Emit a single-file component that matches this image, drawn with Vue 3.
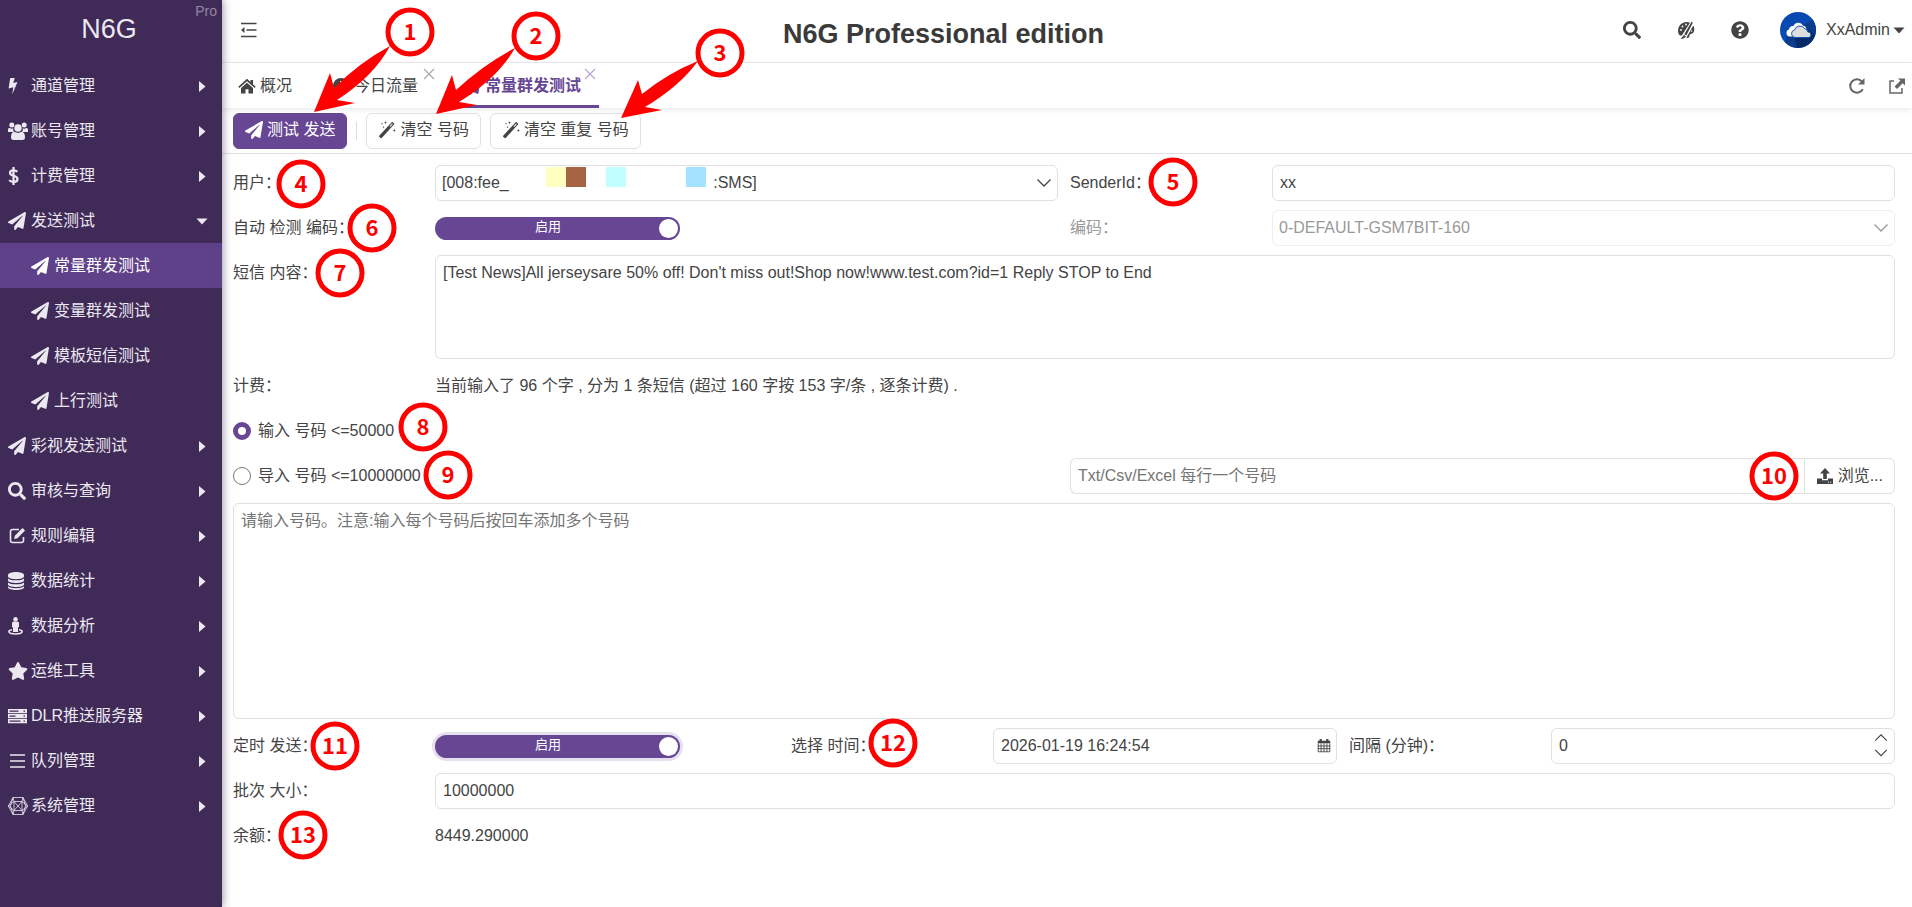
<script setup>
import { h, ref } from 'vue'

const shapes = {
  plane: ['0 0 512 512', '<path d="M476 3.2L12.5 270.6c-18.1 10.4-15.8 35.6 2.2 43.2L121 358.4l287.3-253.2c5.5-4.9 13.3 2.6 8.6 8.3L176 407v80.5c0 23.6 28.5 32.9 42.5 15.8L282 426l124.6 52.2c14.2 6 30.4-2.9 33-18.2l72-432C515 7.8 493.3-6.8 476 3.2z"/>'],
  bolt: ['0 0 18 18', '<path d="M2.200 1h4.600L5.200 6l4.300-1.100L4.200 17.500l1.100-7.300L.6 11.400z"/>'],
  users: ['0 0 20 18', '<circle cx="3.800" cy="3" r="2.500"/><circle cx="16.200" cy="3" r="2.500"/><path d="M0 10V7.500Q0 5.500 1.800 6q2 1.200 3.600.2Q4.500 8.600 6 10zM20 10V7.500Q20 5.500 18.200 6q-2 1.200-3.600.2Q15.500 8.600 14 10z"/><circle cx="10" cy="6" r="3.700"/><path d="M3 15.300C3 12 4.200 9.800 6.400 9.800q3.600 2.200 7.200 0C15.800 9.800 17 12 17 15.300q0 2.700-2.500 2.700h-9Q3 18 3 15.300z"/>'],
  dollar: ['0 0 18 18', '<path d="M9.300 4.700C8.200 3.400 2 2.200 2 5.900c0 3.700 7.500 2 7.500 6 0 4-6.700 3.300-8.300 1.200M5.500 0v18" fill="none" stroke="currentColor" stroke-width="2.200"/>'],
  search: ['0 0 512 512', '<path d="M505 442.700L405.300 343c-4.500-4.500-10.600-7-17-7H372c27.600-35.300 44-79.700 44-128C416 93.100 322.900 0 208 0S0 93.100 0 208s93.100 208 208 208c48.300 0 92.700-16.400 128-44v16.300c0 6.400 2.500 12.500 7 17l99.700 99.700c9.400 9.400 24.600 9.400 33.900 0l28.300-28.300c9.400-9.400 9.400-24.600.1-34zM208 336c-70.700 0-128-57.200-128-128 0-70.700 57.200-128 128-128 70.700 0 128 57.200 128 128 0 70.700-57.200 128-128 128z"/>'],
  edit: ['0 0 18 18', '<path d="M11 2.500H4.500q-2 0-2 2v9q0 2 2 2h9q2 0 2-2V10" fill="none" stroke="currentColor" stroke-width="1.600"/><path d="M6.200 12l.6-3.300L14 1.500q.6-.5 1.200 0l1.400 1.400q.5.600 0 1.200L9.500 11.300z"/>'],
  database: ['0 0 18 18', '<path d="M0 3c0-4 16-4 16 0v1.600c0 3.400-16 3.400-16 0z"/><path d="M0 6.400c2 2.500 14 2.500 16 0v2.200c0 3.300-16 3.300-16 0zM0 10.400c2 2.500 14 2.500 16 0v2.200c0 3.300-16 3.300-16 0zM0 14.300c2 2.500 14 2.500 16 0v1c0 3.600-16 3.600-16 0z"/>'],
  person: ['0 0 18 18', '<circle cx="7.500" cy="2.200" r="2.200"/><path d="M4 6q0-1.500 1.500-1.500h4Q11 4.500 11 6v4l-1 .5V15H5v-4.500L4 10z"/><path d="M4 12.700C-1 13.500 0 17 7.500 17s8.500-3.500 3.500-4.300" fill="none" stroke="currentColor" stroke-width="1.600"/>'],
  star: ['0 0 576 512', '<path d="M259.300 17.800L194 150.200 47.900 171.500c-26.200 3.800-36.700 36.100-17.700 54.600l105.700 103-25 145.500c-4.500 26.300 23.200 46 46.400 33.700L288 439.600l130.700 68.700c23.200 12.200 50.900-7.400 46.400-33.700l-25-145.500 105.700-103c19-18.500 8.500-50.800-17.700-54.600L382 150.200 316.700 17.800c-11.700-23.600-45.600-23.900-57.400 0z"/>'],
  server: ['0 0 19 18', '<path fill-rule="evenodd" d="M0 2h19v4.300H0zM1.500 3.400v1.400h9V3.400zM15.500 3.400v1.400H17V3.400zM0 7h19v4.300H0zM1.500 8.400v1.400h6V8.400zM15.500 8.400v1.400H17V8.400zM0 12h19v4.300H0zM1.500 13.400v1.400h11v-1.400zM15.500 13.400v1.400H17v-1.400z"/>'],
  lines: ['0 0 18 18', '<path d="M2 3h15M2 9h15M2 15h15" fill="none" stroke="currentColor" stroke-width="1.300"/>'],
  mesh: ['0 0 20 18', '<g fill="none" stroke="currentColor" stroke-width=".8"><path d="M5 .5h10L19.600 9 15 17.500H5L.4 9z"/><path d="M5 .5L6 4.500h8l1-4M6 4.500L.4 9 6 13.500l8-9L19.600 9 14 13.500l-8-9v9h8v-9M5 17.500l1-4M15 17.500l-1-4M5 .5L2.500 9 5 17.500M15 .5L17.500 9 15 17.500"/></g>'],
  fold: ['0 0 18 18', '<path d="M1 2.500h15.500M6.500 9h10M1 15.500h15.500" fill="none" stroke="currentColor" stroke-width="1.400"/><path d="M4.500 6v6L1 9z"/>'],
  palette: ['0 0 18 18', '<path d="M1 10C1 4.500 5 1 9.500 1q2 0 3.500.7L4.800 14.500C2.500 15.300 1 13 1 10z"/><path d="M14.600.8l1.300.7-6.600 13-2-1.200zM16.300 4.500c2 3.500 1 8.500-2.500 8.500-1.200 0-1.300.8-1.300 2q-.3 2.500-3.200 1.800zM6.800 14l2 1.200Q7.600 17.800 3.400 18q1.800-1.500 3.400-4z"/><g fill="#fff"><circle cx="4" cy="9" r=".9"/><circle cx="5.500" cy="5.500" r=".9"/><circle cx="9" cy="3.500" r=".9"/><circle cx="14.500" cy="10" r=".8"/></g>'],
  help: ['0 0 512 512', '<path d="M504 256c0 136.997-111.043 248-248 248S8 392.997 8 256C8 119.083 119.043 8 256 8s248 111.083 248 248zM262.655 90c-54.497 0-89.255 22.957-116.549 63.758-3.536 5.286-2.353 12.415 2.715 16.258l34.699 26.310c5.205 3.947 12.621 3.008 16.665-2.122 17.864-22.658 30.113-35.797 57.303-35.797 20.429 0 45.698 13.148 45.698 32.958 0 14.976-12.363 22.667-32.534 33.976C247.128 238.528 216 254.941 216 296v4c0 6.627 5.373 12 12 12h56c6.627 0 12-5.373 12-12v-1.333c0-28.462 83.186-29.647 83.186-106.667 0-58.002-60.165-102-116.531-102zM256 338c-25.365 0-46 20.635-46 46 0 25.364 20.635 46 46 46s46-20.636 46-46c0-25.365-20.635-46-46-46z"/>'],
  home: ['0 0 18 18', '<path d="M9 1.800l3.500 3.200V3H15v4.300l2.700 2.400-1 1.200L9 4.200l-7.700 6.700-1-1.200z"/><path d="M9 5.800l6 5.200v5.500h-4.500v-4.300h-3v4.300H3V11z"/>'],
  clock: ['0 0 18 18', '<path fill-rule="evenodd" d="M9 1a8 8 0 1 0 0 16A8 8 0 1 0 9 1zM8 4h2v4.500l3 2-1 1.500-4-2.500z"/>'],
  wand: ['0 0 18 18', '<path d="M1.200 14.700L13.700 1.200q.5-.5 1 0l1.300 1.200q.5.500 0 1L3.700 17q-.5.500-1 0l-1.500-1.300q-.5-.5 0-1z"/><path d="M11.600 5.200l2.400-2.600.7.700-2.400 2.600z" fill="#fff"/><path d="M7.500 0l.4 1.300 1.300.4-1.300.4-.4 1.300-.4-1.300-1.300-.4 1.300-.4zM4 1.500l.3.900.9.3-.9.300-.3.900-.3-.9-.9-.3.900-.3zM16.300 8l.4 1.100 1.100.4-1.100.4-.4 1.100-.4-1.100-1.100-.4 1.100-.4zM5.500 5l.3.800.8.300-.8.300-.3.800-.3-.8-.8-.3.800-.3z"/>'],
  refresh: ['0 0 18 18', '<path d="M14.800 12.200A6.700 6.700 0 1 1 14 4.600" fill="none" stroke="currentColor" stroke-width="2"/><path d="M16.500 1v6.500H10z"/>'],
  external: ['0 0 18 18', '<path d="M6 4H2v12h12v-5" fill="none" stroke="currentColor" stroke-width="1.500"/><path d="M10 1.500h7v7l-2.300-2.300L9 12 6.600 9.600l5.700-5.800z"/>'],
  upload: ['0 0 18 18', '<path d="M9 1l5 5.500h-3.200V12H7.200V6.500H4z"/><path fill-rule="evenodd" d="M1 11.500h5v1.700h6v-1.700h5V17H1zM12 14.700v1h1v-1zM14.300 14.700v1h1v-1z"/>'],
  calendar: ['0 0 18 18', '<path d="M2 3h2V1h2.500v2h5V1H14v2h2v3H2z"/><path d="M2.500 6v9.500h13V6M2 9h14M2 12h14M5.700 6v9.500M9 6v9.500M12.300 6v9.500" fill="none" stroke="currentColor" stroke-width="1"/>'],
  close: ['0 0 18 18', '<path d="M4 4l10 10M14 4L4 14" fill="none" stroke="currentColor" stroke-width="1.300"/>'],
  down: ['0 0 18 18', '<path d="M2.500 5.500L9 12l6.500-6.500" fill="none" stroke="currentColor" stroke-width="1.300"/>'],
  up: ['0 0 18 18', '<path d="M2.500 12L9 5.500l6.500 6.500" fill="none" stroke="currentColor" stroke-width="1.300"/>'],
  caretRight: ['0 0 18 18', '<path d="M6 4l6.500 5.500L6 15z"/>'],
  caretDown: ['0 0 18 18', '<path d="M3.500 6.500h11L9 12.500z"/>']
}

const Icon = (props) =>
  h('svg', {
    viewBox: shapes[props.name][0],
    fill: 'currentColor',
    'aria-hidden': 'true',
    innerHTML: shapes[props.name][1]
  })
Icon.props = ['name']

const menu = [
  { icon: 'bolt', text: '通道管理' },
  { icon: 'users', text: '账号管理' },
  { icon: 'dollar', text: '计费管理' },
  {
    icon: 'plane',
    text: '发送测试',
    children: ['常量群发测试', '变量群发测试', '模板短信测试', '上行测试']
  },
  { icon: 'plane', text: '彩视发送测试' },
  { icon: 'search', text: '审核与查询' },
  { icon: 'edit', text: '规则编辑' },
  { icon: 'database', text: '数据统计' },
  { icon: 'person', text: '数据分析' },
  { icon: 'star', text: '运维工具' },
  { icon: 'server', text: 'DLR推送服务器' },
  { icon: 'lines', text: '队列管理' },
  { icon: 'mesh', text: '系统管理' }
]

const marks = [
  [410, 32], [536, 36], [720, 53], [301, 184], [1173, 182], [372, 228], [340, 273],
  [423, 427], [448, 475], [1774, 476], [335, 746], [893, 743], [303, 835]
]

const account = '[008:fee_' + '\u00a0'.repeat(46) + ':SMS]'
const sender = ref('xx')
const autoDetect = ref(true)
const message = ref("[Test News]All jerseysare 50% off! Don't miss out!Shop now!www.test.com?id=1 Reply STOP to End")
const source = ref('input')
const scheduled = ref(true)
const sendAt = ref('2026-01-19 16:24:54')
const interval = ref(0)
const batch = ref('10000000')
</script>

<template>
  <div class="app">
    <aside class="sidebar">
      <div class="brand"><span class="brand-name">N6G</span><small class="edition">Pro</small></div>
      <nav>
        <template v-for="item in menu" :key="item.text">
          <a href="#" class="item">
            <span class="item-icon"><Icon :name="item.icon" class="icon" /></span>
            <span class="item-text">{{ item.text }}</span>
            <Icon :name="item.children ? 'caretDown' : 'caretRight'" class="caret" />
          </a>
          <a
            v-for="(child, i) in item.children"
            :key="child"
            href="#"
            class="item child"
            :class="{ active: i === 0 }"
          >
            <span class="item-icon"><Icon name="plane" class="icon" /></span>
            <span>{{ child }}</span>
          </a>
        </template>
      </nav>
    </aside>

    <main class="main">
      <header class="header">
        <button class="fold" aria-label="折叠菜单"><Icon name="fold" class="icon" /></button>
        <h1>N6G Professional edition</h1>
        <div class="tools">
          <button aria-label="搜索"><Icon name="search" class="icon" /></button>
          <button aria-label="主题"><Icon name="palette" class="icon" /></button>
          <button aria-label="帮助"><Icon name="help" class="icon" /></button>
        </div>
        <button class="user">
          <svg class="avatar" viewBox="0 0 36 36" aria-hidden="true">
            <circle cx="18" cy="18" r="18" fill="#094ab2" />
            <path d="M22 14L32.500 7.300A18 18 0 0 1 34.500 25L28 22z" fill="#0a3c8c" />
            <path d="M7 24h7l4 11.900A18 18 0 0 1 5 30z" fill="#0a3c8c" />
            <path d="M14 24.500L29 18l6 5A18 18 0 0 1 17 36z" fill="#062a66" />
            <path d="M9.500 24.500a3.600 3.600 0 0 1-.5-7 3.800 3.800 0 0 1 4.300-3.500 5.300 5.300 0 0 1 9.700-.3 3.500 3.500 0 0 1 3.300 3.300l-5 7.500z" fill="#fff" />
            <path d="M15.500 25.500a3.800 3.800 0 0 1-1-7.500 5.600 5.600 0 0 1 10-1.500 4 4 0 0 1 3.300 3.500 2.800 2.800 0 0 1 1 5.500z" fill="#dedede" stroke="#094ab2" stroke-width=".9" />
          </svg>
          <span>XxAdmin</span>
          <Icon name="caretDown" class="icon" />
        </button>
      </header>

      <div class="tabs">
        <a href="#" class="tab"><Icon name="home" class="icon" />概况</a>
        <a href="#" class="tab"><Icon name="clock" class="icon" />今日流量<Icon name="close" class="close" /></a>
        <a href="#" class="tab current"><Icon name="plane" class="icon" />常量群发测试<Icon name="close" class="close" /></a>
        <div class="tab-tools">
          <button aria-label="刷新"><Icon name="refresh" class="icon" /></button>
          <button aria-label="新窗口打开"><Icon name="external" class="icon" /></button>
        </div>
      </div>

      <div class="toolbar">
        <button class="btn primary"><Icon name="plane" class="icon" />测试 发送</button>
        <span class="divider"></span>
        <button class="btn"><Icon name="wand" class="icon" />清空 号码</button>
        <button class="btn"><Icon name="wand" class="icon" />清空 重复 号码</button>
      </div>

      <form class="form" @submit.prevent>
        <div class="row halves">
          <div class="field">
            <label for="account">用户：</label>
            <div class="control">
              <select id="account" class="box"><option>{{ account }}</option></select>
              <Icon name="down" class="chevron" />
              <span class="swatches"><i class="yellow"></i><i class="brown"></i><i></i><i class="cyan"></i><i></i><i></i><i></i><i class="blue"></i></span>
            </div>
          </div>
          <div class="field">
            <label for="sender">SenderId：</label>
            <div class="control"><input id="sender" v-model="sender" class="box" type="text" /></div>
          </div>
        </div>

        <div class="row halves">
          <div class="field">
            <label for="detect">自动 检测 编码：</label>
            <label class="switch">
              <input id="detect" v-model="autoDetect" type="checkbox" /><span class="state">启用</span><span class="knob"></span>
            </label>
          </div>
          <div class="field disabled">
            <label for="coding">编码：</label>
            <div class="control">
              <select id="coding" class="box" disabled><option>0-DEFAULT-GSM7BIT-160</option></select>
              <Icon name="down" class="chevron" />
            </div>
          </div>
        </div>

        <div class="field top">
          <label for="message">短信 内容：</label>
          <div class="control"><textarea id="message" v-model="message" class="box message"></textarea></div>
        </div>

        <div class="field">
          <span class="caption">计费：</span>
          <span>当前输入了 96 个字 , 分为 1 条短信 (超过 160 字按 153 字/条 , 逐条计费) .</span>
        </div>

        <label class="radio"><input v-model="source" type="radio" name="source" value="input" />输入 号码 &lt;=50000</label>

        <div class="row halves">
          <label class="radio"><input v-model="source" type="radio" name="source" value="file" />导入 号码 &lt;=10000000</label>
          <div class="upload">
            <input class="box" type="text" aria-label="号码文件" placeholder="Txt/Csv/Excel 每行一个号码" />
            <button type="button" class="browse"><Icon name="upload" class="icon" />浏览...</button>
          </div>
        </div>

        <textarea class="box numbers" aria-label="号码" placeholder="请输入号码。注意:输入每个号码后按回车添加多个号码"></textarea>

        <div class="row thirds">
          <div class="field">
            <label for="schedule">定时 发送：</label>
            <label class="switch focus">
              <input id="schedule" v-model="scheduled" type="checkbox" /><span class="state">启用</span><span class="knob"></span>
            </label>
          </div>
          <div class="field">
            <label for="time">选择 时间：</label>
            <div class="control">
              <input id="time" v-model="sendAt" class="box" type="text" />
              <Icon name="calendar" class="chevron small" />
            </div>
          </div>
          <div class="field">
            <label for="interval">间隔 (分钟)：</label>
            <div class="control">
              <input id="interval" v-model="interval" class="box" type="number" />
              <div class="spin">
                <button type="button" aria-label="增加" @click="interval++"><Icon name="up" class="icon" /></button>
                <button type="button" aria-label="减少" @click="interval--"><Icon name="down" class="icon" /></button>
              </div>
            </div>
          </div>
        </div>

        <div class="field">
          <label for="batch">批次 大小：</label>
          <div class="control"><input id="batch" v-model="batch" class="box" type="text" /></div>
        </div>

        <div class="field">
          <span class="caption">余额：</span>
          <span>8449.290000</span>
        </div>
      </form>
    </main>

    <svg class="marks" aria-hidden="true">
      <path d="M314 112L330 73L334 88Q360 62 390 46Q374 76 337 100L355 103Z" />
      <path d="M436 114L452 75L456 90Q484 64 515 48Q498 78 459 102L477 105Z" />
      <path d="M621 118L638 80L642 94Q668 73 698 61Q680 86 645 107L662 110Z" />
      <g v-for="(m, i) in marks" :key="i">
        <circle :cx="m[0]" :cy="m[1]" r="22" />
        <text :x="m[0]" :y="m[1] + 8">{{ i + 1 }}</text>
      </g>
    </svg>
  </div>
</template>

<style>
body {
  margin: 0;
}
</style>

<style scoped>
.app {
  position: relative;
  display: flex;
  min-height: 100vh;
  background: #fff;
  color: #444;
  font: 16px/24px "Liberation Sans", "Noto Sans CJK SC", sans-serif;
}
.app * {
  box-sizing: border-box;
}
button {
  padding: 0;
  border: 0;
  background: none;
  color: inherit;
  font: inherit;
  cursor: pointer;
}
a {
  color: inherit;
  text-decoration: none;
}
.icon {
  flex: none;
  width: 18px;
  height: 18px;
}

.sidebar {
  position: relative;
  z-index: 1;
  flex: none;
  width: 222px;
  background: #402a58;
  color: #ebe8f0;
  box-shadow: 1px 0 8px rgba(64, 42, 88, 0.5);
}
.brand {
  display: flex;
  justify-content: center;
  align-items: center;
  height: 63px;
  padding: 0 4px 6px 0;
  position: relative;
  font-size: 27px;
}
.edition {
  position: absolute;
  top: 0;
  right: 5px;
  color: #9288a2;
  font-size: 14px;
  line-height: 22px;
}
.item {
  display: flex;
  align-items: center;
  height: 45px;
  padding: 0 11px 0 8px;
}
.item-icon {
  display: flex;
  flex: none;
  width: 23px;
}
.item-icon .icon {
  width: auto;
  max-width: 20px;
}
.item-text {
  flex: 1;
}
.caret {
  width: 18px;
  height: 18px;
}
.child {
  padding-left: 31px;
}
.active {
  background: #5f4189;
  color: #fff;
}

.main {
  flex: 1;
  min-width: 0;
}
.header {
  display: flex;
  align-items: center;
  height: 63px;
  padding: 0 4px 2px 0;
  border-bottom: 1px solid #eee;
}
.fold {
  width: 50px;
  padding-left: 18px;
  line-height: 0;
  text-align: left;
}
h1 {
  flex: 1;
  margin: 0;
  padding-top: 8px;
  color: #3a3a3a;
  font-size: 27px;
  line-height: 36px;
  text-align: center;
}
.tools {
  display: flex;
  gap: 36px;
  padding: 0 31px 0 8px;
}
.tools button {
  display: flex;
}
.user {
  display: flex;
  align-items: center;
}
.avatar {
  width: 36px;
  height: 36px;
  margin-right: 10px;
}

.tabs {
  display: flex;
  height: 45px;
  padding-right: 6px;
  box-shadow: 0 1px 6px rgba(0, 0, 0, 0.1);
}
.tab {
  display: flex;
  align-items: center;
  gap: 4px;
  position: relative;
  padding: 0 20px;
}
.tab:first-child {
  padding-left: 16px;
}
.close {
  position: absolute;
  top: 2px;
  right: 0;
  width: 18px;
  height: 18px;
  color: #aaa;
}
.current {
  border-bottom: 3px solid #674694;
  margin-left: 5px;
  padding: 3px 18px 0 20px;
  color: #674694;
  font-weight: bold;
}
.current .close {
  color: #b9a5d2;
}
.tab-tools {
  display: flex;
  align-items: center;
  gap: 22px;
  margin-left: auto;
  color: #666;
}
.tab-tools button {
  display: flex;
}

.toolbar {
  display: flex;
  align-items: center;
  gap: 9px;
  height: 46px;
  padding: 0 11px;
  border-bottom: 1px solid #e0e0e0;
}
.btn {
  display: flex;
  align-items: center;
  gap: 4px;
  height: 36px;
  padding: 0 11px 2px;
  border: 1px solid #e0e0e0;
  border-radius: 6px;
  background: #fff;
}
.primary {
  border-color: #674694;
  background: #674694;
  color: #fff;
}
.divider {
  width: 1px;
  height: 18px;
  background: #ddd;
}

.form {
  display: flex;
  flex-direction: column;
  gap: 9px;
  padding: 11px 17px 11px 11px;
}
.row {
  display: grid;
  gap: 12px;
}
.halves {
  grid-template-columns: 1fr 1fr;
}
.thirds {
  grid-template-columns: 1fr 1fr 1fr;
}
.field {
  display: flex;
  align-items: center;
  min-height: 36px;
}
.field > label:first-child,
.caption {
  flex: none;
  width: 202px;
}
.top {
  align-items: flex-start;
}
.top > label:first-child {
  padding-top: 6px;
}
.disabled > label,
.disabled .chevron {
  color: #999;
}
.control {
  display: flex;
  flex: 1;
  position: relative;
  min-width: 0;
}
.box {
  display: block;
  width: 100%;
  height: 36px;
  margin: 0;
  padding: 0 7px;
  border: 1px solid #e0e0e0;
  border-radius: 6px;
  outline: 0;
  background: #fff;
  color: #444;
  font: inherit;
  appearance: none;
  resize: none;
}
.box::placeholder {
  color: #757575;
}
.box:disabled {
  border-color: #eee;
  color: #999;
  opacity: 1;
}
.box[type="number"] {
  appearance: textfield;
}
.box::-webkit-inner-spin-button {
  appearance: none;
}
select.box {
  padding: 0 6px;
}
textarea.box {
  padding: 5px 7px;
}
.message {
  height: 104px;
}
.numbers {
  height: 216px;
}
.chevron {
  position: absolute;
  top: 9px;
  right: 5px;
  width: 18px;
  height: 18px;
  pointer-events: none;
}
.small {
  width: 16px;
  height: 16px;
  top: 10px;
}
.swatches {
  display: flex;
  position: absolute;
  top: 2px;
  left: 111px;
  pointer-events: none;
}
.swatches i {
  width: 20px;
  height: 20px;
}
.yellow {
  background: #ffffc0;
}
.brown {
  background: #a56443;
}
.cyan {
  background: #c0ffff;
}
.blue {
  background: #a4e1ff;
}

.switch {
  display: flex;
  align-items: center;
  width: 245px;
  height: 23px;
  padding: 0 2px;
  border-radius: 12px;
  background: #674694;
  color: #fff;
  font-size: 13px;
  line-height: 20px;
}
.switch input {
  position: absolute;
  opacity: 0;
}
.focus {
  box-shadow: 0 0 0 3px #e6e0ee;
}
.state {
  flex: 1;
  padding-bottom: 2px;
  text-align: center;
}
.knob {
  width: 19px;
  height: 19px;
  border-radius: 50%;
  background: #fff;
}

.radio {
  display: flex;
  align-items: center;
  gap: 7px;
  height: 36px;
}
.radio input {
  width: 18px;
  height: 18px;
  margin: 0;
  border: 1px solid #777;
  border-radius: 50%;
  background: #fff;
  appearance: none;
}
.radio input:checked {
  border: 5px solid #674694;
}
.upload {
  display: flex;
}
.upload .box {
  border-right: 0;
  border-radius: 6px 0 0 6px;
}
.browse {
  display: flex;
  flex: none;
  align-items: center;
  gap: 4px;
  padding: 0 11px;
  border: 1px solid #e0e0e0;
  border-radius: 0 6px 6px 0;
}
.spin {
  display: flex;
  flex-direction: column;
  justify-content: center;
  position: absolute;
  top: 2px;
  right: 6px;
}
.spin button {
  display: flex;
  height: 15px;
  align-items: center;
}
.spin .icon {
  width: 16px;
  height: 16px;
}

.marks {
  position: absolute;
  inset: 0;
  z-index: 2;
  width: 100%;
  height: 100%;
  pointer-events: none;
  fill: #f00;
}
.marks circle {
  fill: #fff;
  stroke: #f00;
  stroke-width: 5px;
}
.marks text {
  font: bold 22px "Noto Sans CJK SC", sans-serif;
  text-anchor: middle;
}
</style>
